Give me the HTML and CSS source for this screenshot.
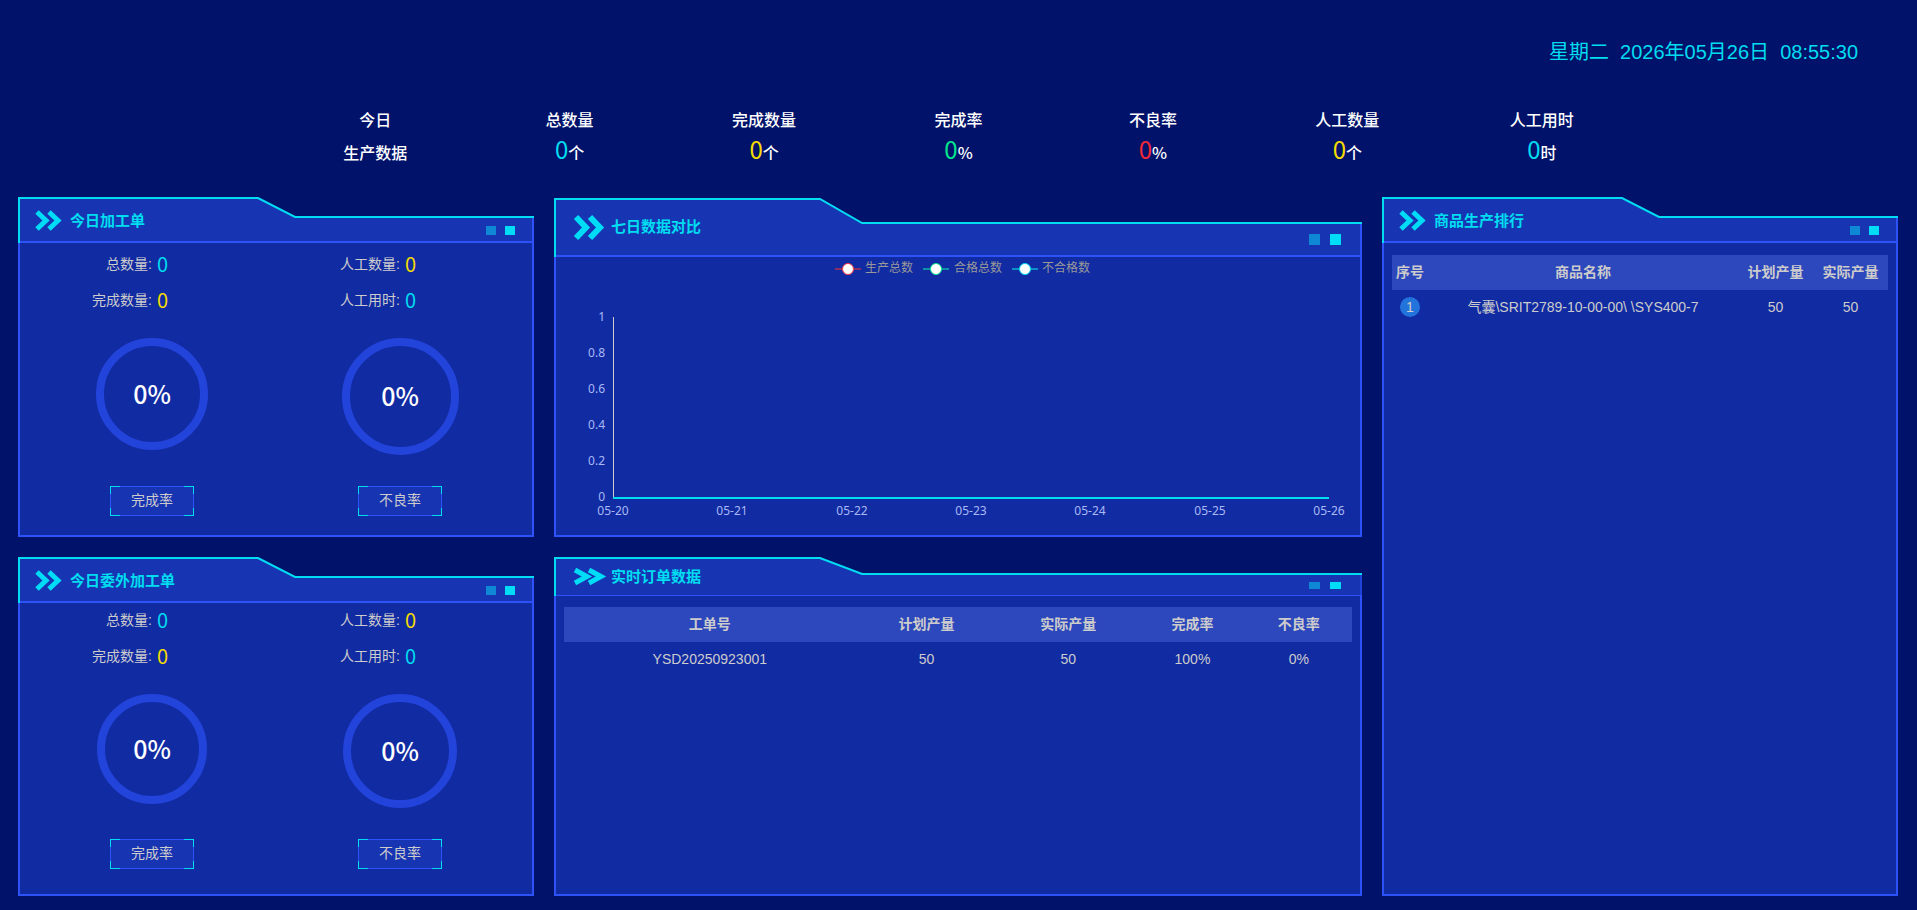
FILE: index.html
```html
<!DOCTYPE html>
<html lang="zh-CN">
<head>
    <meta charset="utf-8" />
    <title>生产看板</title>
    <link rel="stylesheet" href="styles.css">
</head>
<body>
    <header class="top">
        <time class="clock">星期二&nbsp; 2026年05月26日&nbsp; 08:55:30</time>
    </header>

    <section class="summary">
        <div class="stat"><p>今日</p><p>生产数据</p></div>
        <div class="stat"><p>总数量</p><p><b class="cyan">0</b>个</p></div>
        <div class="stat"><p>完成数量</p><p><b class="yellow">0</b>个</p></div>
        <div class="stat"><p>完成率</p><p><b class="green">0</b>%</p></div>
        <div class="stat"><p>不良率</p><p><b class="red">0</b>%</p></div>
        <div class="stat"><p>人工数量</p><p><b class="yellow">0</b>个</p></div>
        <div class="stat"><p>人工用时</p><p><b class="cyan">0</b>时</p></div>
    </section>

    <main class="board">
        <section class="panel">
            <div class="panel-head">
                <svg class="frame" viewBox="0 0 516 46" preserveAspectRatio="none">
                    <path class="fill" d="M0 0H240L277 19H516V46H0z" />
                    <path class="base" d="M0 45H516M515 20V46" />
                    <path class="edge" d="M1 46V1H240L277 20H516" />
                    <path class="arrow" d="M19 15L28 23.500L19 32M31 15L40 23.500L31 32" />
                    <path class="dim" d="M468 29h10v9h-10z" />
                    <path class="lit" d="M487 29h10v9h-10z" />
                </svg>
                <h2>今日加工单</h2>
            </div>
            <div class="panel-body orders">
                <dl class="figures">
                    <div><dt>总数量:</dt><dd class="cyan">0</dd></div>
                    <div><dt>人工数量:</dt><dd class="yellow">0</dd></div>
                    <div><dt>完成数量:</dt><dd class="yellow">0</dd></div>
                    <div><dt>人工用时:</dt><dd class="cyan">0</dd></div>
                </dl>
                <div class="rings">
                    <div class="ring">0%</div>
                    <div class="ring large">0%</div>
                </div>
                <div class="tags">
                    <span class="tag">完成率</span>
                    <span class="tag">不良率</span>
                </div>
            </div>
        </section>

        <section class="panel">
            <div class="panel-head tall">
                <svg class="frame" viewBox="0 0 808 60" preserveAspectRatio="none">
                    <path class="fill" d="M0 1H266L308 25H808V60H0z" />
                    <path class="base" d="M0 59H808M807 26V60" />
                    <path class="edge" d="M1 60V2H266L308 26H808" />
                    <path class="arrow wide" d="M22 20L32 30.500L22 41M36 20L46 30.500L36 41" />
                    <path class="dim" d="M755 37h11v11h-11z" />
                    <path class="lit" d="M776 37h11v11h-11z" />
                </svg>
                <h2>七日数据对比</h2>
            </div>
            <div class="panel-body">
                <svg class="chart" viewBox="0 0 804 274">
                    <g class="legend">
                        <path stroke="#892f65" d="M279 12h26" />
                        <circle cx="292" cy="12" r="5.500" stroke="#f23443" />
                        <text x="309" y="15">生产总数</text>
                        <path stroke="#0f8fa5" d="M367 12h26" />
                        <circle cx="380" cy="12" r="5.500" stroke="#00e68c" />
                        <text x="398" y="15">合格总数</text>
                        <path stroke="#0f8fc8" d="M456 12h26" />
                        <circle cx="469" cy="12" r="5.500" stroke="#00dcf0" />
                        <text x="486" y="15">不合格数</text>
                    </g>
                    <g class="y-axis">
                        <text x="49" y="64">1</text>
                        <text x="49" y="100">0.8</text>
                        <text x="49" y="136">0.6</text>
                        <text x="49" y="172">0.4</text>
                        <text x="49" y="208">0.2</text>
                        <text x="49" y="244">0</text>
                        <path d="M57.500 60V241" />
                    </g>
                    <g class="x-axis">
                        <text x="57" y="258">05-20</text>
                        <text x="176" y="258">05-21</text>
                        <text x="296" y="258">05-22</text>
                        <text x="415" y="258">05-23</text>
                        <text x="534" y="258">05-24</text>
                        <text x="654" y="258">05-25</text>
                        <text x="773" y="258">05-26</text>
                        <path d="M57 241H773" />
                    </g>
                </svg>
            </div>
        </section>

        <section class="panel ranking">
            <div class="panel-head">
                <svg class="frame" viewBox="0 0 516 46" preserveAspectRatio="none">
                    <path class="fill" d="M0 0H240L277 19H516V46H0z" />
                    <path class="base" d="M0 45H516M515 20V46" />
                    <path class="edge" d="M1 46V1H240L277 20H516" />
                    <path class="arrow" d="M19 15L28 23.500L19 32M31 15L40 23.500L31 32" />
                    <path class="dim" d="M468 29h10v9h-10z" />
                    <path class="lit" d="M487 29h10v9h-10z" />
                </svg>
                <h2>商品生产排行</h2>
            </div>
            <div class="panel-body list">
                <table>
                    <colgroup><col class="w-no"><col><col class="w-num"><col class="w-num"></colgroup>
                    <thead>
                        <tr><th>序号</th><th>商品名称</th><th>计划产量</th><th>实际产量</th></tr>
                    </thead>
                    <tbody>
                        <tr><td><span class="no">1</span></td><td>气囊\SRIT2789-10-00-00\ \SYS400-7</td><td>50</td><td>50</td></tr>
                    </tbody>
                </table>
            </div>
        </section>

        <section class="panel">
            <div class="panel-head">
                <svg class="frame" viewBox="0 0 516 46" preserveAspectRatio="none">
                    <path class="fill" d="M0 0H240L277 19H516V46H0z" />
                    <path class="base" d="M0 45H516M515 20V46" />
                    <path class="edge" d="M1 46V1H240L277 20H516" />
                    <path class="arrow" d="M19 15L28 23.500L19 32M31 15L40 23.500L31 32" />
                    <path class="dim" d="M468 29h10v9h-10z" />
                    <path class="lit" d="M487 29h10v9h-10z" />
                </svg>
                <h2>今日委外加工单</h2>
            </div>
            <div class="panel-body orders outsourced">
                <dl class="figures">
                    <div><dt>总数量:</dt><dd class="cyan">0</dd></div>
                    <div><dt>人工数量:</dt><dd class="yellow">0</dd></div>
                    <div><dt>完成数量:</dt><dd class="yellow">0</dd></div>
                    <div><dt>人工用时:</dt><dd class="cyan">0</dd></div>
                </dl>
                <div class="rings">
                    <div class="ring">0%</div>
                    <div class="ring large">0%</div>
                </div>
                <div class="tags">
                    <span class="tag">完成率</span>
                    <span class="tag">不良率</span>
                </div>
            </div>
        </section>

        <section class="panel">
            <div class="panel-head short">
                <svg class="frame" viewBox="0 0 808 39" preserveAspectRatio="none">
                    <path class="fill" d="M0 0H266L308 16H808V39H0z" />
                    <path class="base thin" d="M0 38.500H808M807 17V39" />
                    <path class="edge" d="M1 39V1H266L308 17H808" />
                    <path class="arrow" d="M21 13L33 19.500L21 26M35 13L47 19.500L35 26" />
                    <path class="dim" d="M755 25h11v7h-11z" />
                    <path class="lit" d="M776 25h11v7h-11z" />
                </svg>
                <h2>实时订单数据</h2>
            </div>
            <div class="panel-body list">
                <table>
                    <colgroup><col><col class="w-18"><col class="w-18"><col class="w-13"><col class="w-13"></colgroup>
                    <thead>
                        <tr><th>工单号</th><th>计划产量</th><th>实际产量</th><th>完成率</th><th>不良率</th></tr>
                    </thead>
                    <tbody>
                        <tr><td>YSD20250923001</td><td>50</td><td>50</td><td>100%</td><td>0%</td></tr>
                    </tbody>
                </table>
            </div>
        </section>
    </main>
</body>
</html>
```
FILE: styles.css
```css
* {
    box-sizing: border-box;
}

body {
    margin: 0;
    min-height: 100vh;
    display: flex;
    flex-direction: column;
    background-color: #001269;
    color: #ccc;
    font: 14px/20px "Liberation Sans", "Noto Sans CJK SC", sans-serif;
}

h2, p, dl, dd {
    margin: 0;
}

.cyan { color: #00dcf0; }
.yellow { color: #f5dc00; }
.green { color: #00e68c; }
.red { color: #f52837; }

.top {
    height: 103px;
    padding: 36px 59px 0 0;
    text-align: right;
}

.clock {
    color: #00dcf0;
    font-size: 20px;
    line-height: 32px;
}

/* today's totals */
.summary {
    width: 71%;
    height: 94px;
    margin: 0 auto;
    display: flex;
}

.stat {
    flex: 1;
    text-align: center;
    color: #fff;
    font: 500 16px/33px "Noto Sans CJK SC", sans-serif;
}

.stat b {
    font-size: 24px;
    font-weight: 400;
    line-height: 24px;
}

.board {
    flex: 1;
    display: grid;
    grid-template-columns: 516fr 808fr 516fr;
    grid-template-rows: 340fr 339fr;
    gap: 20px;
    padding: 0 19px 14px 18px;
}

/* panels */
.panel {
    display: flex;
    flex-direction: column;
}

.ranking {
    grid-row: 1 / 3;
    grid-column: 3;
}

.panel-head {
    position: relative;
    height: 46px;
    padding-left: 52px;
}

.panel-head.tall {
    height: 60px;
    padding-left: 57px;
}

.panel-head.short {
    height: 39px;
    padding-left: 57px;
}

.panel-head h2 {
    position: relative;
    color: #00dcf0;
    font: 700 15px/45px "Noto Sans CJK SC", sans-serif;
}

.panel-head.tall h2 {
    line-height: 58px;
}

.panel-head.short h2 {
    line-height: 37px;
}

.frame {
    position: absolute;
    left: 0;
    top: 0;
    width: 100%;
    height: 100%;
    fill: none;
}

.frame .fill { fill: #1734b3; }
.frame .base { stroke: #2c52f8; stroke-width: 2; }
.frame .thin { stroke-width: 1; }
.frame .edge { stroke: #00dcf0; stroke-width: 2; }
.frame .arrow { stroke: #00dcf5; stroke-width: 5; }
.frame .wide { stroke-width: 6; }
.frame .dim { fill: #0e87d4; }
.frame .lit { fill: #00dcf5; }

.panel-body {
    flex: 1;
    border: 2px solid #2c52f8;
    border-top: 0;
    background-color: #112ba3;
}

/* work orders */
.orders {
    padding: 4px 16px 0 0;
}

.figures {
    display: grid;
    grid-template-columns: 1fr 1fr;
}

.figures div {
    display: flex;
    justify-content: flex-end;
    gap: 5px;
    height: 36px;
    padding-right: 100px;
    line-height: 34px;
}

.figures dd {
    font-family: "Noto Sans CJK SC", sans-serif;
    font-size: 20px;
}

.rings, .tags {
    display: grid;
    grid-template-columns: 264fr 232fr;
    justify-items: center;
}

.rings {
    height: 132px;
    padding-top: 19px;
}

.ring {
    width: 112px;
    height: 112px;
    display: flex;
    align-items: center;
    justify-content: center;
    padding-bottom: 3px;
    border: 8px solid #2344db;
    border-radius: 50%;
    color: #fff;
    font: 500 25px/36px "Noto Sans CJK SC", sans-serif;
}

.ring.large {
    width: 117px;
    height: 117px;
}

.tags {
    padding-top: 35px;
}

/* thin frame with lit corners */
.tag {
    width: 84px;
    border: 1px solid transparent;
    background:
        linear-gradient(#00dcf0, #00dcf0) 0 0 / 10px 1px,
        linear-gradient(#00dcf0, #00dcf0) 0 0 / 1px 8px,
        linear-gradient(#00dcf0, #00dcf0) 100% 0 / 10px 1px,
        linear-gradient(#00dcf0, #00dcf0) 100% 0 / 1px 8px,
        linear-gradient(#00dcf0, #00dcf0) 0 100% / 10px 1px,
        linear-gradient(#00dcf0, #00dcf0) 0 100% / 1px 8px,
        linear-gradient(#00dcf0, #00dcf0) 100% 100% / 10px 1px,
        linear-gradient(#00dcf0, #00dcf0) 100% 100% / 1px 8px,
        linear-gradient(#1734b3, #1734b3),
        #2c52f8;
    background-repeat: no-repeat;
    background-origin: border-box;
    background-clip: border-box, border-box, border-box, border-box, border-box,
        border-box, border-box, border-box, padding-box, border-box;
    line-height: 27px;
    height: 30px;
    text-align: center;
}

.outsourced {
    padding-top: 0;
}

.outsourced .ring {
    width: 110px;
    height: 110px;
}

.outsourced .ring.large {
    width: 114px;
    height: 114px;
}

.outsourced .tags {
    padding-top: 32px;
}

/* chart */
.chart {
    display: block;
    width: 100%;
    font: 12px "Noto Sans", "Noto Sans CJK SC", sans-serif;
}

.legend { fill: #999; stroke-width: 2; }
.legend text { stroke: none; }
.legend circle { fill: #fff; stroke-width: 1; }
.y-axis, .x-axis { fill: #a9b9f5; }
.y-axis { text-anchor: end; }
.x-axis { text-anchor: middle; }
.y-axis path { stroke: #ccc; }
.x-axis path { stroke: #00dcf0; stroke-width: 2; }

/* tables */
.list {
    padding: 12px 8px;
}

.short + .list {
    padding-top: 11px;
}

table {
    width: 100%;
    table-layout: fixed;
    border-collapse: collapse;
    text-align: center;
}

th, td {
    height: 35px;
    padding: 0 0 1px;
}

thead {
    background-color: #2d48bd;
}

.w-no { width: 36px; }
.w-num { width: 75px; }
.w-18 { width: 18%; }
.w-13 { width: 13.500%; }

.no {
    display: inline-block;
    width: 20px;
    border-radius: 50%;
    background-color: #2373dc;
}
```
